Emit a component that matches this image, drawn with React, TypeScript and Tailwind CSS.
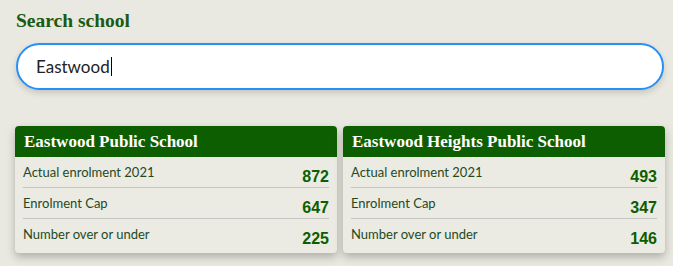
import React from "react";

const schools = [
  { name: "Eastwood Public School", actual: 872, cap: 647, diff: 225 },
  { name: "Eastwood Heights Public School", actual: 493, cap: 347, diff: 146 },
];

function Card({ s }: { s: (typeof schools)[number] }) {
  const rows: [string, number][] = [
    ["Actual enrolment 2021", s.actual],
    ["Enrolment Cap", s.cap],
    ["Number over or under", s.diff],
  ];
  return (
    <div className="flex-1 rounded-[4px] bg-[#ebebe4] shadow-[0_4px_8px_rgba(0,0,0,0.25)] overflow-hidden pb-[3px]">
      <div className="h-[31px] bg-[#0d5e00] px-[9px] flex items-center text-white font-bold text-[17px] font-['Liberation_Serif',serif]">
        {s.name}
      </div>
      <div className="px-[8px]">
        {rows.map(([label, v], i) => (
          <div
            key={label}
            className={`h-[31px] flex justify-between ${i < 2 ? "border-b border-[#c4c4c0]" : ""}`}
          >
            <span className="pt-[6px] text-[13px] text-[#1e4a1e] font-['Lato',sans-serif]">{label}</span>
            <span className="pt-[8px] text-[16px] font-bold text-[#0d5e00] font-['Liberation_Sans',sans-serif]">{v}</span>
          </div>
        ))}
      </div>
    </div>
  );
}

export default function App() {
  return (
    <div className="w-[673px] h-[266px] bg-[#e9e9e1] pt-[10px] px-[15px] overflow-hidden">
      <div className="pl-[1px] text-[19.5px] font-bold text-[#1a5a12] font-['Liberation_Serif',serif] leading-[22px]">
        Search school
      </div>
      <div className="mt-[11px] ml-[1px] w-[648px] h-[47px] rounded-full border-2 border-[#2490f8] bg-white shadow-[0_3px_6px_rgba(0,0,0,0.15)] flex items-center pl-[18px]">
        <span className="text-[17px] text-[#222] font-['Lato',sans-serif]">Eastwood</span>
        <span className="w-px h-[19px] bg-black ml-px" />
      </div>
      <div className="mt-[36px] flex gap-[6px] w-[650px]">
        {schools.map((s) => (
          <Card key={s.name} s={s} />
        ))}
      </div>
    </div>
  );
}
